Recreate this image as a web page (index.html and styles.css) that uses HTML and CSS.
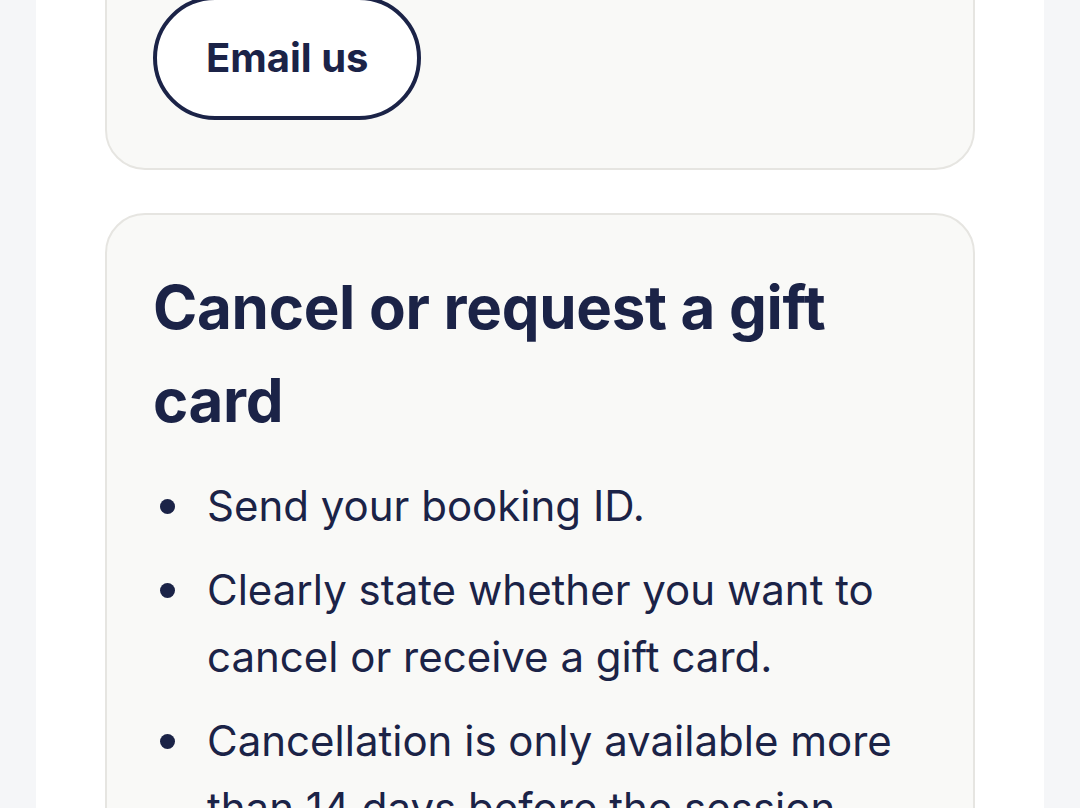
FILE: index.html
```html
<!DOCTYPE html>
<html lang="en">
<head>
<meta charset="UTF-8">
<meta name="viewport" content="width=device-width, initial-scale=1.0">
<title>Contact us</title>
<link rel="stylesheet" href="styles.css">
</head>
<body>

<div class="page">
    <div class="card">
        <a class="button" href="#">Email us</a>
    </div>

    <div class="card">
        <h2>Cancel or request a gift card</h2>
        <ul class="steps">
            <li>Send your booking ID.</li>
            <li>Clearly state whether you want to cancel or receive a gift card.</li>
            <li>Cancellation is only available more than 14 days before the session.</li>
        </ul>
    </div>
</div>

</body>
</html>
```

FILE: styles.css
```css
body {
    margin: 0;
    background-color: #f5f6f8;
    font-family: Inter, "Noto Sans", sans-serif;
    color: #1b2347;
}

.page {
    width: 1008px;
    margin: -52px auto 0;
    padding: 0 69px 40px;
    box-sizing: border-box;
    background-color: #ffffff;
    display: flex;
    flex-direction: column;
    gap: 43px;
    min-height: 900px;
}

.card {
    background-color: #f9f9f7;
    border: 2px solid #e6e5e1;
    border-radius: 40px;
    padding: 46px 46px 48px;
}

.button {
    display: inline-block;
    padding: 28px 49px;
    border: 4px solid #1b2347;
    border-radius: 70px;
    background-color: #ffffff;
    color: #1b2347;
    font-size: 40px;
    font-weight: 700;
    line-height: 1.5;
    text-decoration: none;
}

h2 {
    margin: 0 0 25px;
    font-size: 60px;
    font-weight: 700;
    line-height: 93px;
    letter-spacing: -0.3px;
}

.steps {
    list-style: none;
    margin: 0;
    padding: 0;
    font-size: 42px;
    line-height: 67px;
}

.steps li {
    display: flex;
    margin-bottom: 17px;
}

.steps li::before {
    content: "";
    flex: none;
    width: 15px;
    height: 15px;
    margin: 27px 32px 0 7px;
    border-radius: 50%;
    background-color: #1b2347;
}
```
